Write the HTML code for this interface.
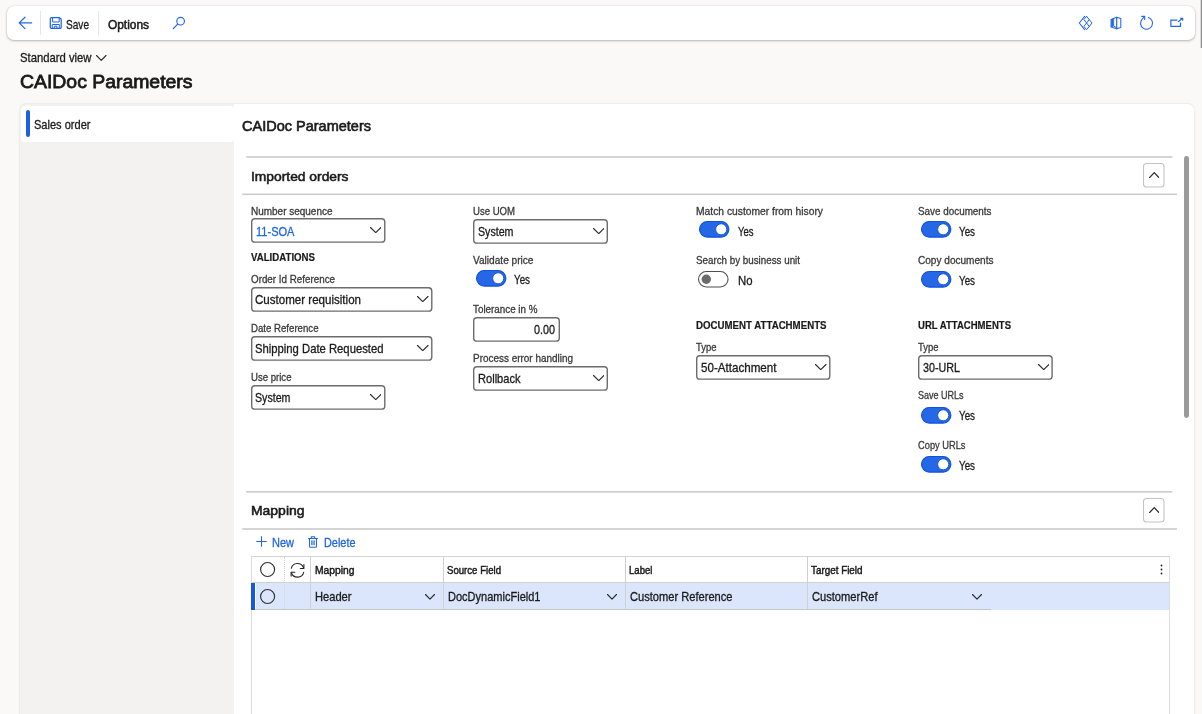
<!DOCTYPE html>
<html lang="en">
<head>
<meta charset="utf-8">
<title>CAIDoc Parameters</title>
<style>
*{box-sizing:border-box}
html,body{margin:0;padding:0}
body{width:1202px;height:714px;overflow:hidden;background:#faf9f8;font-family:"Liberation Sans",Arial,sans-serif;color:#1a1a1a;position:relative}
.abs,.t,svg{position:absolute}
.t{white-space:nowrap;line-height:1;margin:0;padding:0;transform-origin:0 0;display:block;font-weight:400}
.toolbar{left:7px;top:6px;width:1187.5px;height:34px;background:#fff;border-radius:7px;box-shadow:0 1px 2.5px rgba(0,0,0,.26),0 0 1.5px rgba(0,0,0,.16)}
.sep{width:1px;background:#e6e6e6;top:11px;height:24px}
.panel{left:20px;top:103.5px;width:1174.2px;height:640px;background:#f3f2f1;border-radius:6px;box-shadow:0 0 2px rgba(0,0,0,.18)}
.nav-item{left:21px;top:105.5px;width:212.5px;height:36.5px;background:#fff;border-radius:4px}
.nav-bar{left:26px;top:110px;width:4px;height:27px;border-radius:2px;background:#1f5fe2}
.content{left:233.5px;top:103.5px;width:960.7px;height:640px;background:#fff;border-top-right-radius:6px}
.scroll{left:1184px;top:155.8px;width:4.8px;height:262px;border-radius:2.4px;background:#9b9b9b}
.grid{left:250.5px;top:555.5px;width:919px;height:170px;border:1px solid #dcdcdc;border-top-color:#d4d4d4;background:#fff}
.grow{left:256px;top:582.5px;width:913px;height:27px;background:#dbe6fc}
.gsel{left:251.2px;top:582.5px;width:3.8px;height:27px;background:#1557e0}
.vl{width:1px;background:#d2d0ce}
.vd{width:0;border-left:1px dotted #d6d6d6}
</style>
</head>
<body>
<div id="app" style="position:absolute;left:0;top:0;width:1202px;height:714px;will-change:transform">

<header class="abs toolbar"></header>
<div class="abs sep" style="left:40px"></div><div class="abs sep" style="left:98px"></div>
<svg style="left:17px;top:15px" width="17" height="16" viewBox="17 15 17 16" fill="none" stroke="#2266e3" stroke-width="1.2" stroke-linecap="round" stroke-linejoin="round"><path d="M31.6 22.9H19.4M25 17.2L19.2 22.9L25 28.7"/></svg>
<svg style="left:48px;top:15px" width="16" height="16" viewBox="48 15 16 16" fill="none" stroke="#2266e3" stroke-width="1.2" stroke-linecap="round" stroke-linejoin="round"><path d="M51.3 17.6h8.2l1.7 1.7v8a1 1 0 0 1-1 1h-8.9a1 1 0 0 1-1-1v-8.7a1 1 0 0 1 1-1z" stroke-width="1.25"/><path d="M52.6 17.8v4.2h6.6v-4.2M52.2 28.2v-3.7h7.1v3.7M54.3 28.2v-2h2.6v2" stroke-width="1"/></svg>
<span class="t" style="left:65.9px;top:18.65px;font-size:12.29px;transform:scaleX(0.8214);-webkit-text-stroke:.3px currentColor">Save</span>
<span class="t" style="left:107.9px;top:18.65px;font-size:12.29px;transform:scaleX(0.9686);-webkit-text-stroke:0.52px currentColor">Options</span>
<svg style="left:171px;top:15px" width="16" height="16" viewBox="171 15 16 16" fill="none" stroke="#2266e3" stroke-width="1.2" stroke-linecap="round" stroke-linejoin="round"><circle cx="180.6" cy="21.2" r="3.8" stroke-width="1.15"/><path d="M177.7 24.1L173.3 28.6" stroke-width="1.25"/></svg>
<svg style="left:1077px;top:14px" width="17" height="18" viewBox="1077 14 17 18" fill="none" stroke="#2266e3" stroke-width="1.2" stroke-linecap="round" stroke-linejoin="round"><path d="M1084.6 16.4L1079.3 23L1084.6 29.6" stroke-width="1.05"/><path d="M1086.6 16.3L1092 23L1086.6 29.7L1083.9 26.4L1089.3 19.6M1086.6 16.3L1083.9 19.6L1089.3 26.4" stroke-width="1"/></svg>
<svg style="left:1109px;top:15px" width="14" height="16" viewBox="1109 15 14 16" fill="none" stroke="#2266e3" stroke-width="1.2" stroke-linecap="round" stroke-linejoin="round"><path d="M1111.2 19.5L1116.6 17.3L1120.8 18.5V27.6L1116.6 28.8L1111.2 26.9" stroke-width="1.05"/><path d="M1116.7 17.3V28.8" stroke-width="1.2"/><path d="M1111.1 19.6L1113.7 18.5V26L1111.1 27Z" fill="#2266e3" stroke-width=".6"/><path d="M1113.7 26.2L1116.6 27.6" stroke-width="1"/></svg>
<svg style="left:1138px;top:14px" width="17" height="18" viewBox="1138 14 17 18" fill="none" stroke="#2266e3" stroke-width="1.2" stroke-linecap="round" stroke-linejoin="round"><path d="M1148.4 17.5A6 6 0 1 1 1142.2 19.1L1144.6 16.5" stroke-width="1.1"/><path d="M1141.7 16.4H1144.7V19.5" stroke-width="1.1"/></svg>
<svg style="left:1168px;top:15px" width="17" height="15" viewBox="1168 15 17 15" fill="none" stroke="#2266e3" stroke-width="1.2" stroke-linecap="round" stroke-linejoin="round"><path d="M1177.3 20.2H1170.9V26.4H1180.5V22.6" stroke-width="1.2" stroke-linecap="butt" stroke-linejoin="miter"/><path d="M1178.2 21.7L1182.4 18.5" stroke-width="1.1"/><path d="M1180.4 18H1183V20.4Z" fill="#2266e3" stroke-width=".5"/></svg>
<div class="abs" style="left:1200px;top:0;width:1px;height:48px;background:#d9d9d9"></div><div class="abs" style="left:1201px;top:0;width:1px;height:48px;background:#8c8c8c"></div>
<span class="t" style="left:20.4px;top:52.15px;font-size:12.29px;transform:scaleX(0.9187);-webkit-text-stroke:.3px currentColor">Standard view</span>
<svg style="left:96px;top:55px" width="10.5" height="6" viewBox="0 0 10.5 6"><polyline points="0.5,0.5 5.25,5.4 10.0,0.5" fill="none" stroke="#2b2b2b" stroke-width="1.15" stroke-linecap="round" stroke-linejoin="round"/></svg>
<h1 class="t" style="left:19.9px;top:73.05px;font-size:18.9px;transform:scaleX(1.0270);-webkit-text-stroke:0.79px currentColor">CAIDoc Parameters</h1>
<div class="abs panel"></div>
<nav class="abs nav-item"></nav><div class="abs nav-bar"></div>
<main class="abs content"></main>
<span class="t" style="left:34.4px;top:118.65px;font-size:12.29px;transform:scaleX(0.8995);-webkit-text-stroke:.3px currentColor">Sales order</span>
<h2 class="t" style="left:242.4px;top:118.56px;font-size:14.17px;transform:scaleX(1.0248);-webkit-text-stroke:0.60px currentColor">CAIDoc Parameters</h2>
<svg class="rule" style="left:246px;top:156px" width="928" height="3" viewBox="246 156 928 3"><rect x="246.2" y="156.2" width="926.2" height="1.6" fill="#cbcbcb"/></svg>
<svg class="rule" style="left:242px;top:193px" width="936" height="3" viewBox="242 193 936 3"><rect x="242.2" y="193.5" width="934.8" height="1.6" fill="#cbcbcb"/></svg>
<svg class="rule" style="left:246px;top:491px" width="928" height="3" viewBox="246 491 928 3"><rect x="246.2" y="491.0" width="926.2" height="1.6" fill="#cbcbcb"/></svg>
<svg class="rule" style="left:242px;top:528px" width="936" height="3" viewBox="242 528 936 3"><rect x="242.2" y="528.2" width="934.8" height="1.6" fill="#cbcbcb"/></svg>
<h3 class="t" style="left:250.9px;top:169.85px;font-size:13.23px;transform:scaleX(1.0449);-webkit-text-stroke:0.56px currentColor">Imported orders</h3>
<h3 class="t" style="left:250.9px;top:504.35px;font-size:13.23px;transform:scaleX(1.0548);-webkit-text-stroke:0.56px currentColor">Mapping</h3>
<svg style="left:1142px;top:161.5px" width="24" height="27" viewBox="1142 161.5 24 27"><rect x="1143.5" y="163.0" width="20.5" height="23.5" rx="3" fill="#fff" stroke="#c4c4c4" stroke-width="1.1"/></svg><svg style="left:1148.5px;top:171.5px" width="10.5" height="6.2" viewBox="0 0 10.5 6.2"><polyline points="0.5,5.7 5.25,0.6 10.0,5.7" fill="none" stroke="#2b2b2b" stroke-width="1.25" stroke-linecap="round" stroke-linejoin="round"/></svg>
<svg style="left:1142px;top:496.5px" width="24" height="27" viewBox="1142 496.5 24 27"><rect x="1143.5" y="498.0" width="20.5" height="23.5" rx="3" fill="#fff" stroke="#c4c4c4" stroke-width="1.1"/></svg><svg style="left:1148.5px;top:506.5px" width="10.5" height="6.2" viewBox="0 0 10.5 6.2"><polyline points="0.5,5.7 5.25,0.6 10.0,5.7" fill="none" stroke="#2b2b2b" stroke-width="1.25" stroke-linecap="round" stroke-linejoin="round"/></svg>
<div class="abs scroll"></div>
<svg class="field" style="left:249.5px;top:216.7px" width="136.5" height="26.8" viewBox="249.5 216.7 136.5 26.8"><rect x="251.2" y="218.4" width="133.1" height="23.4" rx="3.2" fill="#fff" stroke="#6c6c6c" stroke-width="1.4"/></svg>
<svg style="left:369.5px;top:227px" width="11.5" height="6.2" viewBox="0 0 11.5 6.2"><polyline points="0.5,0.5 5.75,5.6000000000000005 11.0,0.5" fill="none" stroke="#2b2b2b" stroke-width="1.15" stroke-linecap="round" stroke-linejoin="round"/></svg>
<svg class="field" style="left:249.5px;top:286px" width="183.5" height="26.8" viewBox="249.5 286 183.5 26.8"><rect x="251.2" y="287.7" width="180.1" height="23.4" rx="3.2" fill="#fff" stroke="#6c6c6c" stroke-width="1.4"/></svg>
<svg style="left:417px;top:296.3px" width="11.5" height="6.2" viewBox="0 0 11.5 6.2"><polyline points="0.5,0.5 5.75,5.6000000000000005 11.0,0.5" fill="none" stroke="#2b2b2b" stroke-width="1.15" stroke-linecap="round" stroke-linejoin="round"/></svg>
<svg class="field" style="left:249.5px;top:334.5px" width="183.5" height="26.8" viewBox="249.5 334.5 183.5 26.8"><rect x="251.2" y="336.2" width="180.1" height="23.4" rx="3.2" fill="#fff" stroke="#6c6c6c" stroke-width="1.4"/></svg>
<svg style="left:417px;top:344.8px" width="11.5" height="6.2" viewBox="0 0 11.5 6.2"><polyline points="0.5,0.5 5.75,5.6000000000000005 11.0,0.5" fill="none" stroke="#2b2b2b" stroke-width="1.15" stroke-linecap="round" stroke-linejoin="round"/></svg>
<svg class="field" style="left:249.5px;top:383.5px" width="136.5" height="26.8" viewBox="249.5 383.5 136.5 26.8"><rect x="251.2" y="385.2" width="133.1" height="23.4" rx="3.2" fill="#fff" stroke="#6c6c6c" stroke-width="1.4"/></svg>
<svg style="left:369.5px;top:393.8px" width="11.5" height="6.2" viewBox="0 0 11.5 6.2"><polyline points="0.5,0.5 5.75,5.6000000000000005 11.0,0.5" fill="none" stroke="#2b2b2b" stroke-width="1.15" stroke-linecap="round" stroke-linejoin="round"/></svg>
<svg class="field" style="left:472px;top:217.5px" width="137" height="26.8" viewBox="472 217.5 137 26.8"><rect x="473.7" y="219.2" width="133.6" height="23.4" rx="3.2" fill="#fff" stroke="#6c6c6c" stroke-width="1.4"/></svg>
<svg style="left:592.5px;top:227.8px" width="11.5" height="6.2" viewBox="0 0 11.5 6.2"><polyline points="0.5,0.5 5.75,5.6000000000000005 11.0,0.5" fill="none" stroke="#2b2b2b" stroke-width="1.15" stroke-linecap="round" stroke-linejoin="round"/></svg>
<svg class="field" style="left:472px;top:316px" width="89" height="26.8" viewBox="472 316 89 26.8"><rect x="473.7" y="317.7" width="85.6" height="23.4" rx="3.2" fill="#fff" stroke="#6c6c6c" stroke-width="1.4"/></svg>
<svg class="field" style="left:472px;top:364.5px" width="137" height="26.8" viewBox="472 364.5 137 26.8"><rect x="473.7" y="366.2" width="133.6" height="23.4" rx="3.2" fill="#fff" stroke="#6c6c6c" stroke-width="1.4"/></svg>
<svg style="left:592.5px;top:374.8px" width="11.5" height="6.2" viewBox="0 0 11.5 6.2"><polyline points="0.5,0.5 5.75,5.6000000000000005 11.0,0.5" fill="none" stroke="#2b2b2b" stroke-width="1.15" stroke-linecap="round" stroke-linejoin="round"/></svg>
<svg class="field" style="left:695px;top:353.5px" width="136.5" height="26.8" viewBox="695 353.5 136.5 26.8"><rect x="696.7" y="355.2" width="133.1" height="23.4" rx="3.2" fill="#fff" stroke="#6c6c6c" stroke-width="1.4"/></svg>
<svg style="left:815px;top:364px" width="11.5" height="6.2" viewBox="0 0 11.5 6.2"><polyline points="0.5,0.5 5.75,5.6000000000000005 11.0,0.5" fill="none" stroke="#2b2b2b" stroke-width="1.15" stroke-linecap="round" stroke-linejoin="round"/></svg>
<svg class="field" style="left:917px;top:353.5px" width="136.8" height="26.8" viewBox="917 353.5 136.8 26.8"><rect x="918.7" y="355.2" width="133.4" height="23.4" rx="3.2" fill="#fff" stroke="#6c6c6c" stroke-width="1.4"/></svg>
<svg style="left:1037.5px;top:364px" width="11.5" height="6.2" viewBox="0 0 11.5 6.2"><polyline points="0.5,0.5 5.75,5.6000000000000005 11.0,0.5" fill="none" stroke="#2b2b2b" stroke-width="1.15" stroke-linecap="round" stroke-linejoin="round"/></svg>
<svg class="toggle" style="left:475px;top:269.2px" width="33" height="19" viewBox="475 269.2 33 19"><rect x="476.5" y="270.7" width="29.4" height="15.6" rx="7.8" fill="#2567e4" stroke="#0f51dc" stroke-width="1.1"/><circle cx="498.2" cy="278.5" r="5.55" fill="#fff" stroke="#0f51dc" stroke-width=".9"/></svg>
<svg class="toggle" style="left:697.7px;top:220.4px" width="33" height="19" viewBox="697.7 220.4 33 19"><rect x="699.2" y="221.9" width="29.4" height="15.6" rx="7.8" fill="#2567e4" stroke="#0f51dc" stroke-width="1.1"/><circle cx="720.9000000000001" cy="229.70000000000002" r="5.55" fill="#fff" stroke="#0f51dc" stroke-width=".9"/></svg>
<svg class="toggle" style="left:697.4px;top:270.0px" width="33" height="19" viewBox="697.4 270.0 33 19"><rect x="698.9499999999999" y="271.55" width="29.5" height="15.4" rx="7.7" fill="#fff" stroke="#4f4f4f" stroke-width="1.1"/><circle cx="706.6999999999999" cy="279.25" r="4.7" fill="#6b6b6b"/></svg>
<svg class="toggle" style="left:920px;top:220.4px" width="33" height="19" viewBox="920 220.4 33 19"><rect x="921.5" y="221.9" width="29.4" height="15.6" rx="7.8" fill="#2567e4" stroke="#0f51dc" stroke-width="1.1"/><circle cx="943.2" cy="229.70000000000002" r="5.55" fill="#fff" stroke="#0f51dc" stroke-width=".9"/></svg>
<svg class="toggle" style="left:920px;top:270.0px" width="33" height="19" viewBox="920 270.0 33 19"><rect x="921.5" y="271.5" width="29.4" height="15.6" rx="7.8" fill="#2567e4" stroke="#0f51dc" stroke-width="1.1"/><circle cx="943.2" cy="279.3" r="5.55" fill="#fff" stroke="#0f51dc" stroke-width=".9"/></svg>
<svg class="toggle" style="left:920px;top:405.5px" width="33" height="19" viewBox="920 405.5 33 19"><rect x="921.5" y="407.0" width="29.4" height="15.6" rx="7.8" fill="#2567e4" stroke="#0f51dc" stroke-width="1.1"/><circle cx="943.2" cy="414.8" r="5.55" fill="#fff" stroke="#0f51dc" stroke-width=".9"/></svg>
<svg class="toggle" style="left:920px;top:455.0px" width="33" height="19" viewBox="920 455.0 33 19"><rect x="921.5" y="456.5" width="29.4" height="15.6" rx="7.8" fill="#2567e4" stroke="#0f51dc" stroke-width="1.1"/><circle cx="943.2" cy="464.3" r="5.55" fill="#fff" stroke="#0f51dc" stroke-width=".9"/></svg>
<label class="t" style="left:250.9px;top:206.50px;font-size:10.39px;transform:scaleX(0.9613);-webkit-text-stroke:.3px currentColor;color:#3a3a3a">Number sequence</label>
<span class="t" style="left:250.9px;top:253.00px;font-size:10.39px;transform:scaleX(0.9305);font-weight:700;-webkit-text-stroke:.2px currentColor">VALIDATIONS</span>
<label class="t" style="left:250.9px;top:275.00px;font-size:10.39px;transform:scaleX(0.9458);-webkit-text-stroke:.3px currentColor;color:#3a3a3a">Order Id Reference</label>
<label class="t" style="left:250.9px;top:323.50px;font-size:10.39px;transform:scaleX(0.9288);-webkit-text-stroke:.3px currentColor;color:#3a3a3a">Date Reference</label>
<label class="t" style="left:250.9px;top:372.50px;font-size:10.39px;transform:scaleX(0.9241);-webkit-text-stroke:.3px currentColor;color:#3a3a3a">Use price</label>
<label class="t" style="left:473.4px;top:206.50px;font-size:10.39px;transform:scaleX(0.9221);-webkit-text-stroke:.3px currentColor;color:#3a3a3a">Use UOM</label>
<label class="t" style="left:473.4px;top:255.50px;font-size:10.39px;transform:scaleX(0.9743);-webkit-text-stroke:.3px currentColor;color:#3a3a3a">Validate price</label>
<label class="t" style="left:473.4px;top:304.50px;font-size:10.39px;transform:scaleX(0.9477);-webkit-text-stroke:.3px currentColor;color:#3a3a3a">Tolerance in %</label>
<label class="t" style="left:473.4px;top:353.50px;font-size:10.39px;transform:scaleX(0.9579);-webkit-text-stroke:.3px currentColor;color:#3a3a3a">Process error handling</label>
<label class="t" style="left:696.4px;top:206.50px;font-size:10.39px;transform:scaleX(0.9922);-webkit-text-stroke:.3px currentColor;color:#3a3a3a">Match customer from hisory</label>
<label class="t" style="left:696.4px;top:256.00px;font-size:10.39px;transform:scaleX(0.9441);-webkit-text-stroke:.3px currentColor;color:#3a3a3a">Search by business unit</label>
<span class="t" style="left:696.4px;top:321.00px;font-size:10.39px;transform:scaleX(0.9331);font-weight:700;-webkit-text-stroke:.2px currentColor">DOCUMENT ATTACHMENTS</span>
<label class="t" style="left:696.4px;top:342.50px;font-size:10.39px;transform:scaleX(0.9111);-webkit-text-stroke:.3px currentColor;color:#3a3a3a">Type</label>
<label class="t" style="left:918.4px;top:206.50px;font-size:10.39px;transform:scaleX(0.9511);-webkit-text-stroke:.3px currentColor;color:#3a3a3a">Save documents</label>
<label class="t" style="left:918.4px;top:256.00px;font-size:10.39px;transform:scaleX(0.9697);-webkit-text-stroke:.3px currentColor;color:#3a3a3a">Copy documents</label>
<span class="t" style="left:918.4px;top:321.00px;font-size:10.39px;transform:scaleX(0.9204);font-weight:700;-webkit-text-stroke:.2px currentColor">URL ATTACHMENTS</span>
<label class="t" style="left:918.4px;top:342.50px;font-size:10.39px;transform:scaleX(0.9111);-webkit-text-stroke:.3px currentColor;color:#3a3a3a">Type</label>
<label class="t" style="left:918.4px;top:391.00px;font-size:10.39px;transform:scaleX(0.8669);-webkit-text-stroke:.3px currentColor;color:#3a3a3a">Save URLs</label>
<label class="t" style="left:918.4px;top:440.50px;font-size:10.39px;transform:scaleX(0.8954);-webkit-text-stroke:.3px currentColor;color:#3a3a3a">Copy URLs</label>
<span class="t" style="left:255.9px;top:225.65px;font-size:12.29px;transform:scaleX(0.8999);-webkit-text-stroke:.3px currentColor;color:#2266e3">11-SOA</span>
<span class="t" style="left:255.4px;top:294.15px;font-size:12.29px;transform:scaleX(0.9412);-webkit-text-stroke:.3px currentColor">Customer requisition</span>
<span class="t" style="left:255.4px;top:343.15px;font-size:12.29px;transform:scaleX(0.9180);-webkit-text-stroke:.3px currentColor">Shipping Date Requested</span>
<span class="t" style="left:255.4px;top:391.65px;font-size:12.29px;transform:scaleX(0.8668);-webkit-text-stroke:.3px currentColor">System</span>
<span class="t" style="left:478.4px;top:226.15px;font-size:12.29px;transform:scaleX(0.8668);-webkit-text-stroke:.3px currentColor">System</span>
<span class="t" style="left:533.9px;top:324.15px;font-size:12.29px;transform:scaleX(0.8784);-webkit-text-stroke:.3px currentColor">0.00</span>
<span class="t" style="left:478.4px;top:373.15px;font-size:12.29px;transform:scaleX(0.9022);-webkit-text-stroke:.3px currentColor">Rollback</span>
<span class="t" style="left:701.4px;top:362.15px;font-size:12.29px;transform:scaleX(0.9452);-webkit-text-stroke:.3px currentColor">50-Attachment</span>
<span class="t" style="left:923.4px;top:361.65px;font-size:12.29px;transform:scaleX(0.8741);-webkit-text-stroke:.3px currentColor">30-URL</span>
<span class="t" style="left:514.4px;top:274.15px;font-size:12.29px;transform:scaleX(0.7981);-webkit-text-stroke:.3px currentColor">Yes</span>
<span class="t" style="left:737.9px;top:225.65px;font-size:12.29px;transform:scaleX(0.7732);-webkit-text-stroke:.3px currentColor">Yes</span>
<span class="t" style="left:737.9px;top:275.15px;font-size:12.29px;transform:scaleX(0.9234);-webkit-text-stroke:.3px currentColor">No</span>
<span class="t" style="left:959.4px;top:225.65px;font-size:12.29px;transform:scaleX(0.7981);-webkit-text-stroke:.3px currentColor">Yes</span>
<span class="t" style="left:959.4px;top:275.15px;font-size:12.29px;transform:scaleX(0.7981);-webkit-text-stroke:.3px currentColor">Yes</span>
<span class="t" style="left:959.4px;top:410.15px;font-size:12.29px;transform:scaleX(0.7981);-webkit-text-stroke:.3px currentColor">Yes</span>
<span class="t" style="left:959.4px;top:459.65px;font-size:12.29px;transform:scaleX(0.7981);-webkit-text-stroke:.3px currentColor">Yes</span>
<div class="abs grid"></div>
<div class="abs grow"></div><div class="abs gsel"></div>
<div class="abs" style="left:254.5px;top:609px;width:736px;height:1px;background:#c8c6c4"></div>
<div class="abs" style="left:252px;top:582px;width:917px;height:1px;background:#d2d0ce"></div>
<div class="abs vd" style="left:284px;top:557px;height:52px"></div>
<div class="abs vl" style="left:310.0px;top:557px;height:52px"></div>
<div class="abs vl" style="left:443.0px;top:557px;height:52px"></div>
<div class="abs vl" style="left:625.0px;top:557px;height:52px"></div>
<div class="abs vl" style="left:807.0px;top:557px;height:52px"></div>
<svg style="left:259px;top:561.0px" width="17" height="17" viewBox="0 0 17 17"><circle cx="8.6" cy="8.5" r="7" fill="none" stroke="#2e2e2e" stroke-width="1.15"/></svg>
<svg style="left:259px;top:587.9px" width="17" height="17" viewBox="0 0 17 17"><circle cx="8.6" cy="8.5" r="7" fill="none" stroke="#2e2e2e" stroke-width="1.15"/></svg>
<svg style="left:289px;top:562px" width="17" height="17" viewBox="289 562 17 17" fill="none" stroke="#262626" stroke-width="1.1" stroke-linecap="round" stroke-linejoin="round"><path d="M291.3 568.3A6.4 6.4 0 0 1 303.5 567.6M303.7 572.3A6.4 6.4 0 0 1 291.5 573"/><path d="M303.9 564.6V568.5H300.3M291.1 576.1V572.2H294.8"/></svg>
<svg style="left:1160px;top:564px" width="3" height="11" viewBox="0 0 3 11"><circle cx="1.5" cy="1.5" r=".9" fill="#242424"/><circle cx="1.5" cy="5.5" r=".9" fill="#242424"/><circle cx="1.5" cy="9.5" r=".9" fill="#242424"/></svg>
<svg style="left:255.7px;top:536.4px" width="11" height="11" viewBox="0 0 11 11"><path d="M5.5.3v10.4M.3 5.5h10.4" stroke="#2266e3" stroke-width="1.1"/></svg>
<svg style="left:308.1px;top:536px" width="10" height="12" viewBox="0 0 10 12"><path d="M.5 2.5h9M3.3 2.3V.8h3.4v1.5M1.5 2.6v7.6a1 1 0 0 0 1 1h5a1 1 0 0 0 1-1V2.6" fill="none" stroke="#2266e3" stroke-width="1.05" stroke-linecap="round" stroke-linejoin="round"/><path d="M3.7 4.4v4.8M5 4.4v4.8M6.3 4.4v4.8" stroke="#2266e3" stroke-width=".9"/></svg>
<span class="t" style="left:271.9px;top:536.65px;font-size:12.29px;transform:scaleX(0.8951);-webkit-text-stroke:.3px currentColor;color:#2266e3">New</span>
<span class="t" style="left:323.9px;top:536.65px;font-size:12.29px;transform:scaleX(0.8869);-webkit-text-stroke:.3px currentColor;color:#2266e3">Delete</span>
<span class="t" style="left:314.9px;top:565.50px;font-size:10.39px;transform:scaleX(0.9922);-webkit-text-stroke:0.44px currentColor">Mapping</span>
<span class="t" style="left:447.4px;top:565.50px;font-size:10.39px;transform:scaleX(0.9270);-webkit-text-stroke:0.44px currentColor">Source Field</span>
<span class="t" style="left:629.4px;top:565.50px;font-size:10.39px;transform:scaleX(0.9255);-webkit-text-stroke:0.44px currentColor">Label</span>
<span class="t" style="left:811.4px;top:565.50px;font-size:10.39px;transform:scaleX(0.9499);-webkit-text-stroke:0.44px currentColor">Target Field</span>
<span class="t" style="left:315.4px;top:591.15px;font-size:12.29px;transform:scaleX(0.9061);-webkit-text-stroke:.3px currentColor">Header</span>
<span class="t" style="left:448.4px;top:591.15px;font-size:12.29px;transform:scaleX(0.8975);-webkit-text-stroke:.3px currentColor">DocDynamicField1</span>
<span class="t" style="left:629.9px;top:591.15px;font-size:12.29px;transform:scaleX(0.9046);-webkit-text-stroke:.3px currentColor">Customer Reference</span>
<span class="t" style="left:811.9px;top:591.15px;font-size:12.29px;transform:scaleX(0.9052);-webkit-text-stroke:.3px currentColor">CustomerRef</span>
<svg style="left:425px;top:594px" width="10" height="5.8" viewBox="0 0 10 5.8"><polyline points="0.5,0.5 5.0,5.2 9.5,0.5" fill="none" stroke="#2b2b2b" stroke-width="1.15" stroke-linecap="round" stroke-linejoin="round"/></svg>
<svg style="left:607px;top:594px" width="10" height="5.8" viewBox="0 0 10 5.8"><polyline points="0.5,0.5 5.0,5.2 9.5,0.5" fill="none" stroke="#2b2b2b" stroke-width="1.15" stroke-linecap="round" stroke-linejoin="round"/></svg>
<svg style="left:971.5px;top:594px" width="10" height="5.8" viewBox="0 0 10 5.8"><polyline points="0.5,0.5 5.0,5.2 9.5,0.5" fill="none" stroke="#2b2b2b" stroke-width="1.15" stroke-linecap="round" stroke-linejoin="round"/></svg>
</div>
</body></html>
